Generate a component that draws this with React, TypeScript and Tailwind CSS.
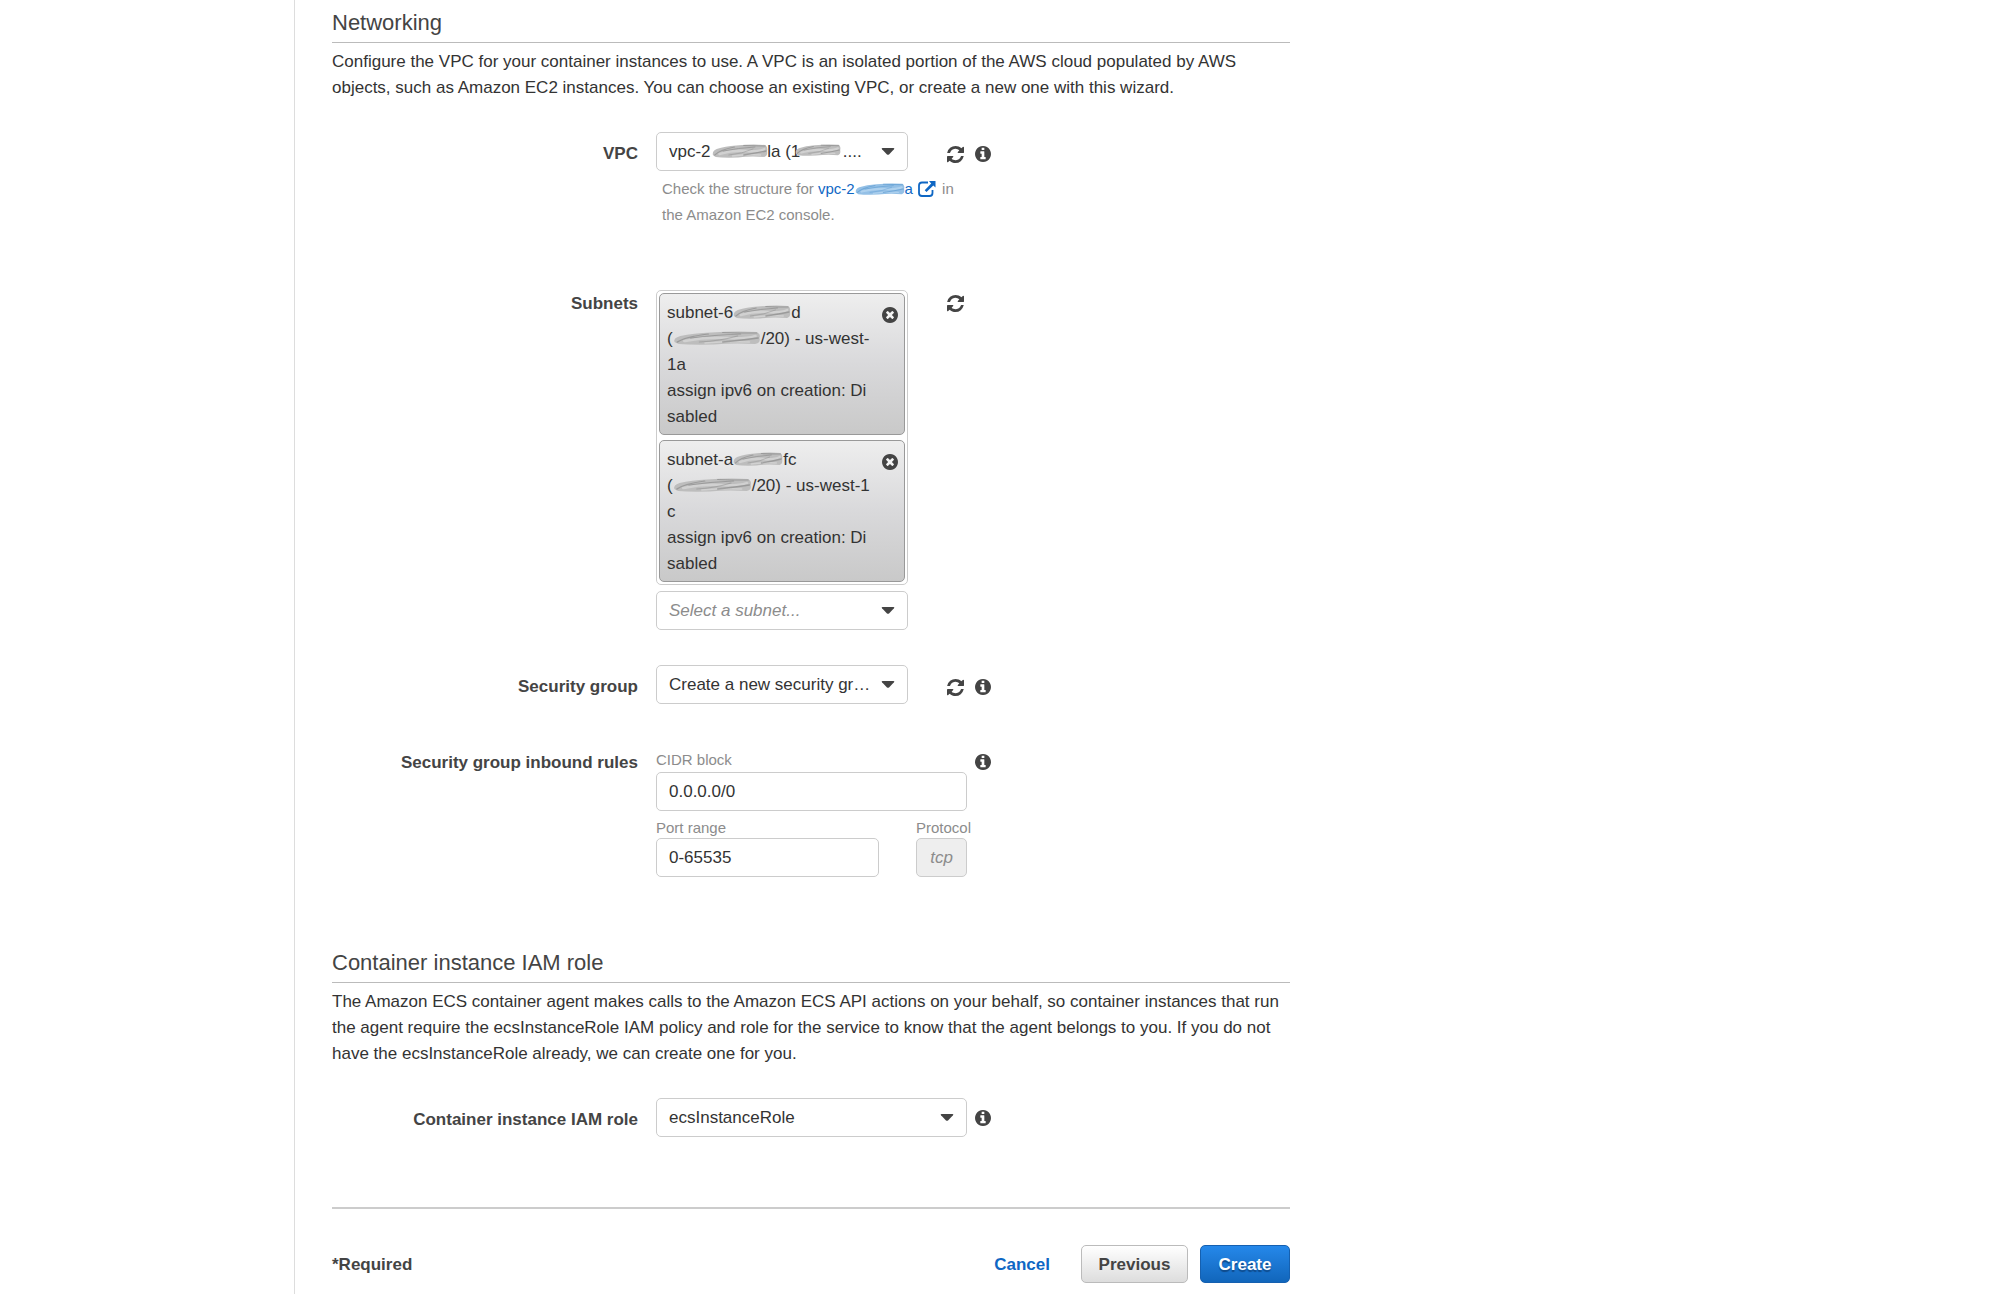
import type { ReactNode } from "react";

const BODY_FONT = "font-['Liberation_Sans',Arial,sans-serif]";

function RefreshIcon() {
  return (
    <svg viewBox="0 128 1536 1536" className="size-[17px] fill-[#444]" aria-hidden="true">
      <path d="M1511 1056q0 5-1 7-64 268-268 434.500t-478 166.500q-146 0-282.500-55t-243.500-157l-129 129q-19 19-45 19t-45-19-19-45v-448q0-26 19-45t45-19h448q26 0 45 19t19 45-19 45l-137 137q71 66 161 102t187 36q134 0 250-65t186-179q11-17 53-117 8-23 30-23h192q13 0 22.500 9.500t9.500 22.500zM1536 256v448q0 26-19 45t-45 19h-448q-26 0-45-19t-19-45 19-45l138-138q-148-137-349-137-134 0-250 65t-186 179q-11 17-53 117-8 23-30 23h-199q-13 0-22.500-9.500t-9.500-22.500v-7q65-268 270-434.500t480-166.500q146 0 284 55.500t245 156.500l130-129q19-19 45-19t45 19 19 45z" />
    </svg>
  );
}

function InfoIcon() {
  return (
    <svg viewBox="128 128 1536 1536" className="size-4 fill-[#444]" aria-hidden="true">
      <path d="M1152 1376v-160q0-14-9-23t-23-9h-96v-512q0-14-9-23t-23-9h-320q-14 0-23 9t-9 23v160q0 14 9 23t23 9h96v320h-96q-14 0-23 9t-9 23v160q0 14 9 23t23 9h448q14 0 23-9t9-23zm-128-896v-160q0-14-9-23t-23-9h-192q-14 0-23 9t-9 23v160q0 14 9 23t23 9h192q14 0 23-9t9-23zm640 416q0 209-103 385.500t-279.500 279.500-385.500 103-385.500-103-279.500-279.500-103-385.500 103-385.500 279.500-279.500 385.500-103 385.500 103 279.500 279.500 103 385.500z" />
    </svg>
  );
}

function RemoveIcon() {
  return (
    <svg viewBox="128 128 1536 1536" className="size-4 fill-[#444]" aria-hidden="true">
      <circle cx="896" cy="896" r="700" fill="#f4f4f4" />
      <path d="M1277 1122q0-26-19-45l-181-181 181-181q19-19 19-45 0-27-19-46l-90-90q-19-19-46-19-26 0-45 19l-181 181-181-181q-19-19-45-19-27 0-46 19l-90 90q-19 19-19 46 0 26 19 45l181 181-181 181q-19 19-19 45 0 27 19 46l90 90q19 19 46 19 26 0 45-19l181-181 181 181q19 19 45 19 27 0 46-19l90-90q19-19 19-46zm387-226q0 209-103 385.500t-279.500 279.500-385.500 103-385.500-103-279.500-279.500-103-385.500 103-385.500 279.500-279.500 385.500-103 385.500 103 279.500 279.500 103 385.500z" />
    </svg>
  );
}

function ExternalLinkIcon() {
  return (
    <svg viewBox="0 0 18 16" className="mr-0.5 ml-[5px] inline-block h-4 w-[18px] align-[-3px]" aria-hidden="true">
      <path d="M10 1.500H4Q1 1.500 1 4.500V12Q1 15 4 15H11.500Q14.500 15 14.500 12V9" fill="none" stroke="#0f67c4" strokeWidth="1.800" />
      <path d="M11 0H17.500V6.500L15.300 4.500L8.500 11L6.700 9.200L13.200 2.500Z" fill="#0f67c4" />
    </svg>
  );
}

/* Hand-smudged patch that hides part of an identifier. */
function Smudge({ className, tone = "gray" }: { className: string; tone?: "gray" | "blue" }) {
  const blue = tone === "blue";
  const base = blue ? "#94c0e6" : "#bdbdbd";
  const dark = blue ? "#5f9dd2" : "#8c8c8c";
  const light = blue ? "#b4d5f0" : "#d6d6d6";
  return (
    <svg viewBox="0 0 60 14" preserveAspectRatio="none" className={className} aria-hidden="true">
      <path d="M1 11Q0 7 5 5Q14 2 26 1.500Q42 0 57 1Q60 3 59 7Q60 12 56 13Q40 12 28 13.500Q12 14 4 13Q2 12 1 11Z" fill={base} />
      <g fill="none" strokeLinecap="round">
        <path d="M8 10Q22 6 36 7T56 5" stroke={light} strokeWidth="2.500" opacity="0.800" />
        <path d="M22 12Q38 10 52 11" stroke={light} strokeWidth="1.500" opacity="0.800" />
        <path d="M3 11Q8 6 24 3" stroke={dark} strokeWidth="1.200" opacity="0.700" />
        <path d="M12 7Q28 4 46 3" stroke={dark} strokeWidth="1" opacity="0.700" />
        <path d="M18 11Q32 10 44 5" stroke={dark} strokeWidth="1" opacity="0.500" />
        <path d="M34 11Q48 9 58 7" stroke={dark} strokeWidth="1.300" opacity="0.700" />
        <path d="M34 1.500Q46 2 57 2" stroke={dark} strokeWidth="1.200" opacity="0.700" />
      </g>
    </svg>
  );
}

function Caret() {
  return (
    <svg viewBox="0 0 14 7" className="pointer-events-none absolute top-4 right-[13px] h-[7px] w-3.5 fill-[#444]" aria-hidden="true">
      <path d="M1.500 0H12.500Q14 0 13 1.300L8 6.400Q7 7.300 6 6.400L1 1.300Q0 0 1.500 0Z" />
    </svg>
  );
}

function Select({ id, value, placeholder, children }: { id: string; value: string; placeholder?: boolean; children?: ReactNode }) {
  return (
    <div className="relative">
      <select
        id={id}
        className={
          "block h-[39px] w-full appearance-none rounded-[5px] border border-[#ccc] bg-white pr-8 pl-3 " +
          (placeholder ? "text-[#8c8c8c] italic" : "text-[#333]")
        }
      >
        <option>{value}</option>
      </select>
      {children}
      <Caret />
    </div>
  );
}

function IconButton({ label, className, children }: { label: string; className: string; children: ReactNode }) {
  return (
    <button type="button" aria-label={label} className={"shrink-0 self-start " + className}>
      {children}
    </button>
  );
}

function Section({ title, children }: { title: string; children: ReactNode }) {
  return (
    <>
      <h2 className="border-b border-[#bbb] pt-px pb-[5px] text-[22px] leading-7">{title}</h2>
      <p className="mt-1.5 mb-[31px] text-[#333]">{children}</p>
    </>
  );
}

function Row({ label, htmlFor, labelClass = "pt-px", className = "", info, children }: { label: string; htmlFor: string; labelClass?: string; className?: string; info?: ReactNode; children: ReactNode }) {
  return (
    <div className={"flex items-start " + className}>
      <label htmlFor={htmlFor} className={"mr-[18px] w-[306px] shrink-0 text-right font-bold " + labelClass}>
        {label}
      </label>
      <div className="w-[311px] shrink-0">{children}</div>
      {info}
    </div>
  );
}

function SubnetChip({ name, lines }: { name: string; lines: ReactNode[] }) {
  return (
    <li className="flex items-start justify-between rounded-[5px] border border-[#999] bg-linear-to-b from-[#eee] via-[#d9d9db] to-[#c9c9c9] pt-1.5 pr-1.5 pb-1 pl-[7px] text-[#333]">
      <div className="whitespace-nowrap">
        {lines.map((line, i) => (
          <div key={i} className="h-[26px]">{line}</div>
        ))}
      </div>
      <IconButton label={"Remove " + name} className="mt-[7px]">
        <RemoveIcon />
      </IconButton>
    </li>
  );
}

const NB = "\u00a0";
const vpcValue = "vpc-2" + NB.repeat(12) + "la (1" + NB.repeat(9) + "....";

export default function App() {
  return (
    <div className={"min-h-screen bg-white pl-[294px] text-[17px] leading-[26px] text-[#444] " + BODY_FONT}>
      <main className="min-h-screen border-l border-[#ddd] pt-2 pl-[37px]">
        <form className="max-w-[958px]">
          <Section title="Networking">
            Configure the VPC for your container instances to use. A VPC is an isolated portion of the AWS cloud
            populated by AWS objects, such as Amazon EC2 instances. You can choose an existing VPC, or create a new one
            with this wizard.
          </Section>

          <Row
            label="VPC"
            htmlFor="vpc"
            labelClass="pt-[9px]"
            info={<IconButton label="About VPC" className="mt-3.5 ml-2"><InfoIcon /></IconButton>}
          >
            <div className="flex justify-between pr-[3px]">
              <div className="w-[252px]">
                <Select id="vpc" value={vpcValue}>
                  <Smudge className="pointer-events-none absolute top-3 left-[56px] h-3.5 w-[56px]" />
                  <Smudge className="pointer-events-none absolute top-3 left-[139px] h-3 w-[46px]" />
                </Select>
              </div>
              <IconButton label="Refresh VPCs" className="mt-3.5"><RefreshIcon /></IconButton>
            </div>
            <p className="mt-[5px] pl-1.5 text-[15px] text-[#8c8c8c]">
              Check the structure for{" "}
              <a href="#vpc" className="text-[#0f67c4]">
                vpc-2
                <Smudge tone="blue" className="inline-block h-3 w-[50px] align-[-1px]" />
                a<ExternalLinkIcon />
              </a>{" "}
              in the Amazon EC2 console.
            </p>
          </Row>

          <Row label="Subnets" htmlFor="subnet" className="mt-[62px]">
            <div className="flex justify-between pr-[3px]">
              <div className="w-[252px]">
                <ul className="mb-1.5 flex flex-col gap-[5px] rounded-[5px] border border-[#ccc] p-0.5">
                  <SubnetChip
                    name="first subnet"
                    lines={[
                      <>subnet-6<Smudge className="inline-block h-3.5 w-[58px] align-[-1px]" />d</>,
                      <>(<Smudge className="inline-block h-3.5 w-[88px] align-[-1px]" />/20) - us-west-</>,
                      "1a",
                      "assign ipv6 on creation: Di",
                      "sabled",
                    ]}
                  />
                  <SubnetChip
                    name="second subnet"
                    lines={[
                      <>subnet-a<Smudge className="inline-block h-3.5 w-[50px] align-[-1px]" />fc</>,
                      <>(<Smudge className="inline-block h-3.5 w-[79px] align-[-1px]" />/20) - us-west-1</>,
                      "c",
                      "assign ipv6 on creation: Di",
                      "sabled",
                    ]}
                  />
                </ul>
                <Select id="subnet" value="Select a subnet..." placeholder />
              </div>
              <IconButton label="Refresh subnets" className="mt-[5px]"><RefreshIcon /></IconButton>
            </div>
          </Row>

          <Row
            label="Security group"
            htmlFor="security-group"
            labelClass="pt-[9px]"
            className="mt-[35px]"
            info={<IconButton label="About security group" className="mt-3.5 ml-2"><InfoIcon /></IconButton>}
          >
            <div className="flex justify-between pr-[3px]">
              <div className="w-[252px]">
                <Select id="security-group" value="Create a new security gr…" />
              </div>
              <IconButton label="Refresh security groups" className="mt-3.5"><RefreshIcon /></IconButton>
            </div>
          </Row>

          <Row
            label="Security group inbound rules"
            htmlFor="cidr"
            className="mt-[45px]"
            info={<IconButton label="About inbound rules" className="mt-[5px] ml-2"><InfoIcon /></IconButton>}
          >
            <div>
              <label htmlFor="cidr" className="block pb-0.5 text-[15px] leading-[21px] text-[#8c8c8c]">CIDR block</label>
              <input
                id="cidr"
                defaultValue="0.0.0.0/0"
                className="block h-[39px] w-full rounded-[5px] border border-[#ccc] px-3 text-[#333]"
              />
              <div className="mt-1.5 flex justify-between">
                <div className="w-[223px]">
                  <label htmlFor="ports" className="block text-[15px] leading-[21px] text-[#8c8c8c]">Port range</label>
                  <input
                    id="ports"
                    defaultValue="0-65535"
                    className="block h-[39px] w-full rounded-[5px] border border-[#ccc] px-3 text-[#333]"
                  />
                </div>
                <div className="w-[51px]">
                  <label htmlFor="protocol" className="block text-[15px] leading-[21px] whitespace-nowrap text-[#8c8c8c]">Protocol</label>
                  <input
                    id="protocol"
                    defaultValue="tcp"
                    disabled
                    className="block h-[39px] w-full rounded-[5px] border border-[#ccc] bg-[#eee] px-1 text-center text-[#8c8c8c] italic"
                  />
                </div>
              </div>
            </div>
          </Row>

          <div className="mt-[71px]">
            <Section title="Container instance IAM role">
              The Amazon ECS container agent makes calls to the Amazon ECS API actions on your behalf, so container
              instances that run the agent require the ecsInstanceRole IAM policy and role for the service to know that
              the agent belongs to you. If you do not have the ecsInstanceRole already, we can create one for you.
            </Section>
          </div>

          <Row
            label="Container instance IAM role"
            htmlFor="iam-role"
            labelClass="pt-[9px]"
            info={<IconButton label="About IAM role" className="mt-3 ml-2"><InfoIcon /></IconButton>}
          >
            <Select id="iam-role" value="ecsInstanceRole" />
          </Row>

          <footer className="mt-[70px] flex items-center border-t-2 border-[#ccc] pt-9 font-bold">
            <span className="mr-auto pt-0.5">*Required</span>
            <a href="#cancel" className="mr-[31px] pt-0.5 text-[#0f67c4]">Cancel</a>
            <button
              type="button"
              className="mr-3 h-[38px] w-[107px] rounded-[5px] border border-[#bbb] bg-linear-to-b from-white to-[#ddd] pt-0.5"
            >
              Previous
            </button>
            <button
              type="submit"
              className="h-[38px] w-[90px] rounded-[5px] border border-[#1560b0] bg-linear-to-b from-[#2588ea] to-[#1166bb] pt-0.5 text-white text-shadow-[0_2px_1px_#0f4a8a]"
            >
              Create
            </button>
          </footer>
        </form>
      </main>
    </div>
  );
}
